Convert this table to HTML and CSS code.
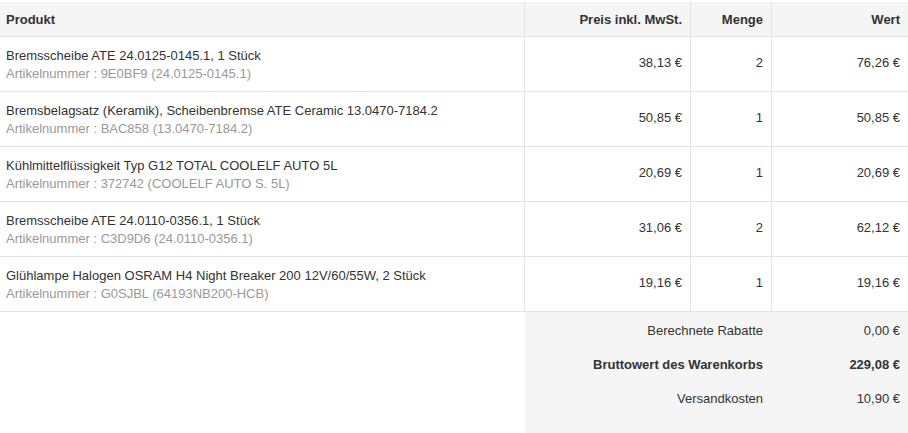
FILE: index.html
```html
<!DOCTYPE html>
<html lang="de">
<head>
<meta charset="utf-8">
<title>Warenkorb</title>
<link rel="stylesheet" href="styles.css">
</head>
<body>
<div class="cart">
  <table class="items">
    <thead>
      <tr>
        <th class="c-prod">Produkt</th>
        <th class="c-price num">Preis inkl. MwSt.</th>
        <th class="c-qty num">Menge</th>
        <th class="c-total num">Wert</th>
      </tr>
    </thead>
    <tbody>
      <tr>
        <td class="c-prod"><div class="name">Bremsscheibe ATE 24.0125-0145.1, 1 Stück</div><div class="sku">Artikelnummer : 9E0BF9 (24.0125-0145.1)</div></td>
        <td class="num">38,13 €</td>
        <td class="num">2</td>
        <td class="num">76,26 €</td>
      </tr>
      <tr>
        <td class="c-prod"><div class="name">Bremsbelagsatz (Keramik), Scheibenbremse ATE Ceramic 13.0470-7184.2</div><div class="sku">Artikelnummer : BAC858 (13.0470-7184.2)</div></td>
        <td class="num">50,85 €</td>
        <td class="num">1</td>
        <td class="num">50,85 €</td>
      </tr>
      <tr>
        <td class="c-prod"><div class="name">Kühlmittelflüssigkeit Typ G12 TOTAL COOLELF AUTO 5L</div><div class="sku">Artikelnummer : 372742 (COOLELF AUTO S. 5L)</div></td>
        <td class="num">20,69 €</td>
        <td class="num">1</td>
        <td class="num">20,69 €</td>
      </tr>
      <tr>
        <td class="c-prod"><div class="name">Bremsscheibe ATE 24.0110-0356.1, 1 Stück</div><div class="sku">Artikelnummer : C3D9D6 (24.0110-0356.1)</div></td>
        <td class="num">31,06 €</td>
        <td class="num">2</td>
        <td class="num">62,12 €</td>
      </tr>
      <tr>
        <td class="c-prod"><div class="name">Glühlampe Halogen OSRAM H4 Night Breaker 200 12V/60/55W, 2 Stück</div><div class="sku">Artikelnummer : G0SJBL (64193NB200-HCB)</div></td>
        <td class="num">19,16 €</td>
        <td class="num">1</td>
        <td class="num">19,16 €</td>
      </tr>
    </tbody>
  </table>
  <div class="summary-wrap">
    <div class="summary">
      <div class="s-label">Berechnete Rabatte</div><div class="s-val">0,00 €</div>
      <div class="s-label strong">Bruttowert des Warenkorbs</div><div class="s-val strong">229,08 €</div>
      <div class="s-label">Versandkosten</div><div class="s-val">10,90 €</div>
    </div>
  </div>
</div>
</body>
</html>
```
FILE: styles.css
```css
html, body {
  margin: 0;
  padding: 0;
  background: #fff;
}
body {
  font-family: "Liberation Sans", Arial, sans-serif;
  font-size: 13px;
  color: #333;
}
.cart {
  width: 908px;
  padding-top: 2px;
}
.items {
  width: 908px;
  border-collapse: separate;
  border-spacing: 0;
  table-layout: fixed;
}
.items th,
.items td {
  box-sizing: border-box;
  line-height: 18px;
  padding: 10px 8px 8px 8px;
  border-bottom: 1px solid #e3e3e3;
  vertical-align: middle;
}
.items td.num {
  padding-top: 8px;
  padding-bottom: 10px;
}
.items th {
  background: #f5f5f5;
  font-weight: bold;
  text-align: left;
  padding: 9px 8px 7px 8px;
}
.items th + th,
.items td + td {
  border-left: 1px solid #e3e3e3;
}
.items .c-prod { width: 524px; padding-left: 6px; }
.items .c-price { width: 166px; }
.items .c-qty { width: 81px; }
.items .c-total { width: 137px; }
.items .num { text-align: right; }
.name { color: #333; }
.sku { color: #999; }
.summary-wrap {
  display: flex;
  justify-content: flex-end;
}
.summary {
  width: 383px;
  background: #f5f5f5;
  display: grid;
  grid-template-columns: 246px 137px;
  padding: 2px 0 30px;
}
.s-label,
.s-val {
  line-height: 18px;
  padding: 8px 8px;
  text-align: right;
}
.strong { font-weight: bold; }
```
